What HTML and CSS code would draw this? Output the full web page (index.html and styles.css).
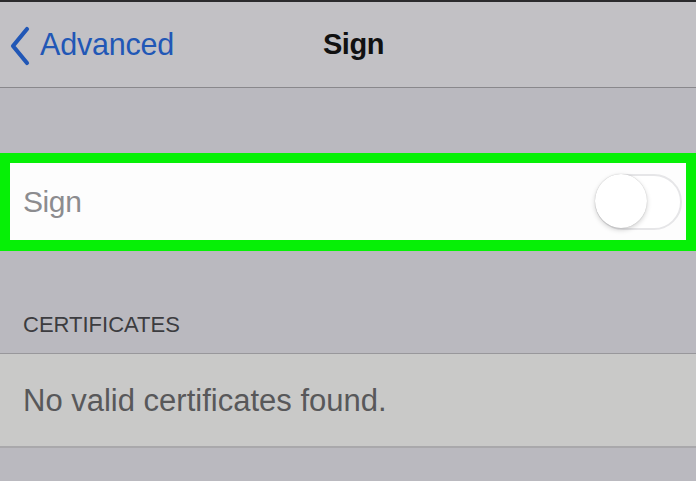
FILE: index.html
```html
<!DOCTYPE html>
<html>
<head>
<meta charset="utf-8">
<link rel="stylesheet" href="styles.css">
</head>
<body>
<div class="screen">
  <div class="topline"></div>
  <header class="nav">
    <a class="back">
      <svg class="chev" width="24" height="40" viewBox="0 0 24 40"><path d="M19 3 L5 20 L19 37" fill="none" stroke="#2157b6" stroke-width="4.2" stroke-linecap="round" stroke-linejoin="round"/></svg>
      <span class="back-label">Advanced</span>
    </a>
    <h1 class="title">Sign</h1>
    <span class="spacer"></span>
  </header>
  <div class="gap"></div>
  <div class="highlight">
    <div class="cell">
      <span class="cell-label">Sign</span>
      <span class="switch"><span class="knob"></span></span>
    </div>
  </div>
  <div class="section-header">CERTIFICATES</div>
  <div class="row">No valid certificates found.</div>
</div>
</body>
</html>
```
FILE: styles.css
```css
html, body {
  margin: 0;
  padding: 0;
}
body {
  width: 696px;
  height: 481px;
  overflow: hidden;
  background: #bab9bf;
  font-family: "Liberation Sans", Arial, sans-serif;
}
.screen {
  display: flex;
  flex-direction: column;
  height: 481px;
}
.topline {
  height: 2px;
  background: #2b2b2d;
}
.nav {
  height: 85px;
  background: #c2c1c5;
  border-bottom: 1px solid #89888c;
  display: grid;
  grid-template-columns: 1fr auto 1fr;
  align-items: center;
}
.back {
  display: flex;
  align-items: center;
  padding-left: 8px;
  color: #2157b6;
}
.chev {
  display: block;
  margin-top: 2px;
}
.back-label {
  font-size: 30.5px;
  margin-left: 8px;
  letter-spacing: -0.2px;
}
.title {
  margin: 0;
  padding-left: 11px;
  font-size: 29px;
  font-weight: bold;
  color: #111;
  letter-spacing: -0.4px;
}
.gap {
  height: 65px;
}
.highlight {
  border: 10px solid #06f006;
  border-bottom-width: 11px;
  background: #fdfdfd;
}
.cell {
  height: 77px;
  display: flex;
  align-items: center;
  justify-content: space-between;
  padding: 0 4px 0 13px;
}
.cell-label {
  font-size: 30px;
  color: #8c8c8f;
  letter-spacing: -0.4px;
}
.switch {
  position: relative;
  width: 83px;
  height: 52px;
  border: 2px solid #e6e6e8;
  border-radius: 28px;
  background: #fff;
}
.knob {
  position: absolute;
  left: -2px;
  top: -2px;
  width: 52px;
  height: 54px;
  border-radius: 50%;
  background: #fff;
  box-shadow: 0 2px 5px rgba(0,0,0,0.18), 0 0 1px rgba(0,0,0,0.25);
}
.section-header {
  height: 102px;
  box-sizing: border-box;
  padding: 61px 0 0 23px;
  font-size: 22px;
  line-height: 26px;
  color: #3c3c40;
}
.row {
  height: 95px;
  box-sizing: border-box;
  border-top: 1px solid #98979b;
  border-bottom: 2px solid #a9a8ab;
  background: #c9c9c8;
  padding: 28px 0 0 23px;
  font-size: 31px;
  line-height: 38px;
  color: #58585a;
}
```
